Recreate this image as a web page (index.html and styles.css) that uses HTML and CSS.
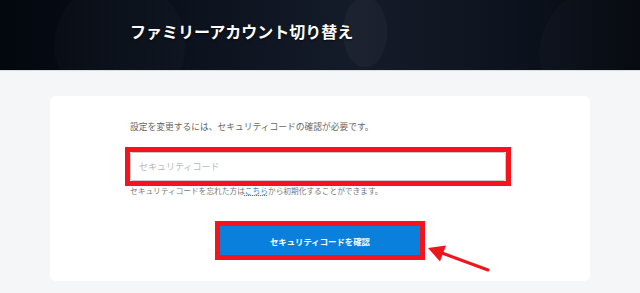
FILE: index.html
```html
<!DOCTYPE html>
<html lang="ja">
<head>
    <meta charset="UTF-8">
    <meta name="viewport" content="width=device-width, initial-scale=1.0">
    <title>ファミリーアカウント切り替え</title>
    <link rel="stylesheet" href="styles.css">
</head>
<body>
    <header class="page-header">
        <h1 class="page-title">ファミリーアカウント切り替え</h1>
    </header>

    <main class="page-main">
        <div class="card">
            <div class="form-body">
                <p class="lead">設定を変更するには、セキュリティコードの確認が必要です。</p>
                <div class="code-field highlight">
                    <input type="password" class="code-input" placeholder="セキュリティコード">
                </div>
                <p class="help">セキュリティコードを忘れた方は<a href="#" class="help-link">こちら</a>から初期化することができます。</p>
            </div>
            <div class="button-row">
                <div class="highlight">
                    <button type="button" class="confirm-btn">セキュリティコードを確認</button>
                </div>
            </div>
        </div>

        <!-- annotation arrow -->
        <svg class="arrow" width="75" height="35" viewBox="0 0 75 35">
            <line x1="22" y1="13" x2="68" y2="30" stroke="#f0141c" stroke-width="3" stroke-linecap="round"/>
            <polygon points="8,8 26,5.5 20,21.5" fill="#f0141c"/>
        </svg>
    </main>
</body>
</html>
```

FILE: styles.css
```css
body {
    margin: 0;
    background: #f5f6f8;
    font-family: "Noto Sans CJK JP", "Noto Sans", sans-serif;
    color: #666;
}
.page-header {
    height: 71px;
    box-sizing: border-box;
    padding: 20px 0 0 130px;
    border-bottom: 1px solid #d8dce3;
    background:
        radial-gradient(circle at 120px 45px, rgba(255, 255, 255, 0.015) 0 65px, transparent 66px),
        radial-gradient(ellipse 22px 35px at 365px 32px, rgba(255, 255, 255, 0.03) 0 100%, transparent 101%),
        radial-gradient(circle at 610px 55px, rgba(255, 255, 255, 0.015) 0 70px, transparent 71px),
        linear-gradient(90deg, #03070e 0%, #0d1420 35%, #151c29 55%, #0d131e 80%, #03070e 100%);
}
.page-title {
    margin: 0;
    font-size: 16px;
    line-height: 22px;
    font-weight: 700;
    color: #fff;
    text-shadow: 0 1px 2px rgba(0, 0, 0, 0.7);
}
.page-main {
    position: relative;
    padding: 25px 50px 0;
}
.card {
    height: 185px;
    box-sizing: border-box;
    background: #fff;
    border-radius: 6px;
    padding-top: 25px;
}
.form-body {
    width: 376px;
    margin-left: 80px;
    display: flex;
    flex-direction: column;
}
.lead {
    margin: 0;
    font-size: 8.75px;
    line-height: 12px;
    color: #666;
}
.highlight {
    border: 5px solid #f5141c;
}
.code-field {
    margin: 14px -5px 0;
    display: flex;
}
.code-input {
    flex: 1;
    height: 29px;
    box-sizing: border-box;
    border: 1px solid #c9c9c9;
    border-radius: 3px;
    padding: 0 8px;
    font-family: inherit;
    font-size: 9px;
    color: #333;
    background: #fff;
}
.code-input::placeholder {
    color: #b8b8b8;
}
.help {
    margin: 0;
    font-size: 7.7px;
    line-height: 10px;
    color: #777;
}
.help-link {
    color: #2f7fd6;
    text-decoration: underline dotted;
}
.button-row {
    display: flex;
    justify-content: center;
    margin-top: 25px;
}
.confirm-btn {
    display: block;
    width: 200px;
    height: 29px;
    border: none;
    background: #0a7fdc;
    color: #fff;
    font-family: inherit;
    font-size: 8.4px;
    font-weight: 700;
    cursor: pointer;
}
.arrow {
    position: absolute;
    left: 420px;
    top: 169px;
}
```
